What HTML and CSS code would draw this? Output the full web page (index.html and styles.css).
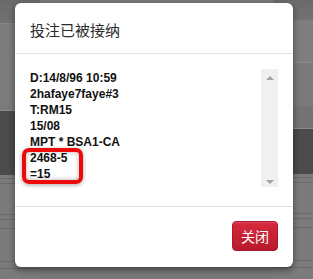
FILE: index.html
```html
<!DOCTYPE html>
<html lang="zh-CN">
<head>
    <meta charset="UTF-8">
    <meta name="viewport" content="width=device-width, initial-scale=1.0">
    <title>投注已被接纳</title>
    <link rel="stylesheet" href="styles.css">
</head>
<body>

    <!-- 背景页面（被遮罩） -->
    <div class="page">
        <div class="page-col">
            <div class="band band-top"></div>
            <div class="band band-light"></div>
            <div class="band band-dark"></div>
            <div class="band band-rows"></div>
        </div>
        <div class="page-col page-col-right">
            <div class="band band-top-r"></div>
            <div class="band band-light-r"></div>
            <div class="band band-mid-r"></div>
            <div class="band band-dark-r"></div>
            <div class="band band-rows"></div>
        </div>
    </div>

    <div class="modal">
        <div class="modal-header">
            <h3>投注已被接纳</h3>
        </div>
        <div class="modal-body">
            <div class="ticket">
                <div class="ticket-text">D:14/8/96 10:59<br>2hafaye7faye#3<br>T:RM15<br>15/08<br>MPT * BSA1-CA<br>2468-5<br>=15</div>
                <div class="scrollbar">
                    <span class="arrow-up"></span>
                    <span class="arrow-down"></span>
                </div>
            </div>
        </div>
        <div class="modal-footer">
            <button class="btn-close">关闭</button>
        </div>
    </div>

    <!-- 标注框 -->
    <div class="highlight"></div>

</body>
</html>
```

FILE: styles.css
```css
html, body {
    margin: 0;
    padding: 0;
}
body {
    width: 313px;
    height: 279px;
    overflow: hidden;
    background-color: #7a7a7a;
    font-family: "Liberation Sans", Arial, "Noto Sans CJK SC", sans-serif;
    position: relative;
}
.page {
    display: flex;
    justify-content: space-between;
    height: 279px;
}
.page-col {
    width: 40px;
    display: flex;
    flex-direction: column;
}
.band-top {
    height: 23px;
    background: linear-gradient(#6a6a6a, #727272);
    border-bottom: 1px solid #858585;
}
.band-light {
    height: 86px;
    background-color: #7c7c7c;
    border-bottom: 1px solid #8a8a8a;
}
.band-dark {
    height: 64px;
    background-color: #4b4b4b;
}
.band-rows {
    flex: 1;
    background-color: #7b7b7b;
    background-image:
        linear-gradient(#6a6a6a, #6a6a6a),
        linear-gradient(#6a6a6a, #6a6a6a),
        linear-gradient(#6a6a6a, #6a6a6a),
        linear-gradient(#6a6a6a, #6a6a6a),
        linear-gradient(#6a6a6a, #6a6a6a),
        linear-gradient(#6a6a6a, #6a6a6a),
        linear-gradient(#6a6a6a, #6a6a6a);
    background-size: 100% 1px;
    background-repeat: no-repeat;
    background-position: 0 3px, 0 8px, 0 39px, 0 44px, 0 53px, 0 86px, 0 93px;
}
.band-top-r {
    height: 20px;
    background: linear-gradient(#6a6a6a, #727272);
}
.band-light-r {
    height: 42px;
    background-color: #7e7e7e;
    border-bottom: 1px solid #8c8c8c;
}
.band-mid-r {
    height: 43px;
    background-color: #7a7a7a;
    border-bottom: 1px solid #8a8a8a;
    padding-bottom: 22px;
    background-clip: content-box;
    box-shadow: inset 0 -22px 0 #737373;
}
.band-dark-r {
    height: 45px;
    background-color: #4b4b4b;
}

.modal {
    position: absolute;
    top: 3px;
    left: 15px;
    width: 278px;
    background-color: #fff;
    border-radius: 6px;
    box-shadow: 0 3px 7px rgba(0, 0, 0, 0.45);
}
.modal-header {
    height: 50px;
    padding: 0 15px;
    display: flex;
    align-items: center;
    border-bottom: 1px solid #e2e2e2;
}
.modal-header h3 {
    margin: 0;
    padding-top: 2px;
    font-family: "Noto Sans CJK SC", sans-serif;
    font-size: 15px;
    font-weight: normal;
    color: #2b2b2b;
}
.modal-body {
    padding: 14px 15px 18px 15px;
    border-bottom: 1px solid #dedede;
}
.ticket {
    display: flex;
    height: 120px;
}
.ticket-text {
    flex: 1;
    padding-top: 2px;
    font-size: 12px;
    font-weight: bold;
    line-height: 16px;
    color: #111;
    white-space: nowrap;
}
.scrollbar {
    width: 17px;
    margin-top: 1px;
    height: 118px;
    background-color: #f0f0f0;
    position: relative;
}
.arrow-up,
.arrow-down {
    position: absolute;
    left: 5px;
    width: 0;
    height: 0;
    border-left: 4px solid transparent;
    border-right: 4px solid transparent;
}
.arrow-up {
    top: 7px;
    border-bottom: 4px solid #a3a3a3;
}
.arrow-down {
    bottom: 3px;
    border-top: 4px solid #a3a3a3;
}
.modal-footer {
    height: 60px;
    padding: 0 15px;
    display: flex;
    align-items: center;
    justify-content: flex-end;
}
.btn-close {
    width: 46px;
    height: 30px;
    padding: 0;
    margin-top: -2px;
    font-family: "Noto Sans CJK SC", sans-serif;
    font-size: 14px;
    color: #fff;
    background: linear-gradient(#d82a3e, #b71a2b);
    border: 1px solid #a8192a;
    border-radius: 4px;
    box-shadow: inset 0 1px 0 rgba(255, 255, 255, 0.15);
}

.highlight {
    position: absolute;
    left: 22px;
    top: 148px;
    width: 53px;
    height: 28px;
    border: 4px solid #ec0a0a;
    border-radius: 7px;
    box-shadow: 0 1px 4px rgba(0, 0, 0, 0.35), inset 0 0 5px rgba(0, 0, 0, 0.3);
}
```
